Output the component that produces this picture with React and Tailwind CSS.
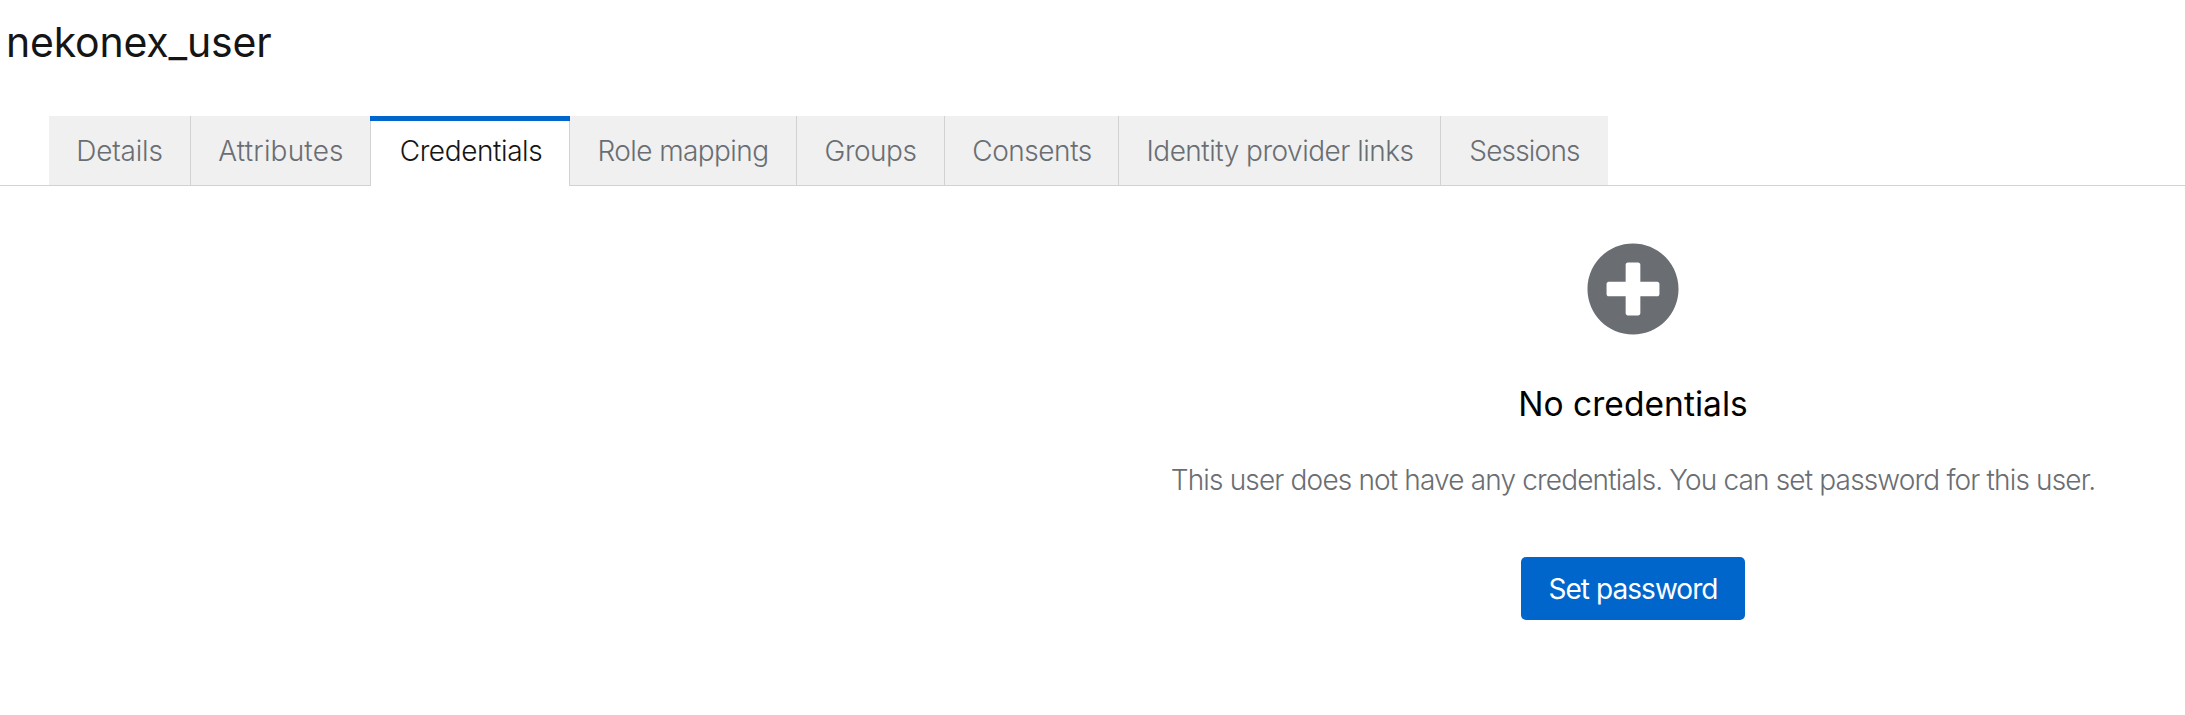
import { FaPlusCircle } from 'react-icons/fa';

const tabs = [
  { label: 'Details', box: 'w-[142px] border-r', text: 'tracking-[-0.2px]' },
  { label: 'Attributes', box: 'w-[179px] pl-px', text: 'tracking-[0.2px]' },
  { label: 'Credentials', box: 'w-[200px] pl-0.5', text: 'tracking-[-0.4px]', active: true },
  { label: 'Role mapping', box: 'w-[227px] border-r', text: 'tracking-[-0.6px]' },
  { label: 'Groups', box: 'w-[148px] border-r', text: 'tracking-[-0.5px]' },
  { label: 'Consents', box: 'w-[174px] border-r pl-px', text: 'tracking-[-0.45px]' },
  { label: 'Identity provider links', box: 'w-[322px] border-r pl-px', text: 'tracking-[-0.5px]' },
  { label: 'Sessions', box: 'w-[167px]', text: 'tracking-[-0.8px]' },
];

function Tab({ label, box, text, active }) {
  const state = active
    ? 'border-x bg-white text-[#151515]'
    : 'border-b bg-[#f0f0f0] text-[#6a6e73]';
  return (
    <button
      type="button"
      role="tab"
      aria-selected={Boolean(active)}
      className={`relative flex h-[70px] shrink-0 items-center justify-center border-[#d2d2d2] text-[28px] font-light ${state} ${box}`}
    >
      {active && <span className="absolute -inset-x-px top-0 h-[5px] bg-[#06c]" />}
      <span className={`whitespace-nowrap ${text}`}>{label}</span>
    </button>
  );
}

export default function App() {
  return (
    <main className="h-[715px] w-full overflow-hidden bg-white font-['Inter',sans-serif]">
      <header className="h-[116px] pt-3 pl-1.5">
        <h1 className="text-[41px] leading-[60px] font-normal tracking-[-0.2px] text-[#151515]">nekonex_user</h1>
      </header>
      <div role="tablist" className="flex h-[70px]">
        <div className="w-[49px] shrink-0 border-b border-[#d2d2d2]" />
        {tabs.map((tab) => (
          <Tab key={tab.label} {...tab} />
        ))}
        <div className="grow border-b border-[#d2d2d2]" />
      </div>
      <section className="ml-[1081px] flex flex-col items-center pt-14">
        <FaPlusCircle className="size-[94px] text-[#6a6e73]" />
        <h2 className="mt-[46px] text-[33.5px] leading-[44px] font-normal tracking-[0.05px] whitespace-nowrap text-black">
          No credentials
        </h2>
        <p className="mt-[33px] text-[28px] leading-[42px] font-light tracking-[-0.84px] whitespace-nowrap text-[#6a6e73]">
          This user does not have any credentials. You can set password for this user.
        </p>
        <button
          type="button"
          className="mt-14 flex h-[63px] w-56 items-center justify-center rounded-[5px] bg-[#06c] text-[28px] font-normal tracking-[-0.95px] whitespace-nowrap text-white"
        >
          Set password
        </button>
      </section>
    </main>
  );
}
